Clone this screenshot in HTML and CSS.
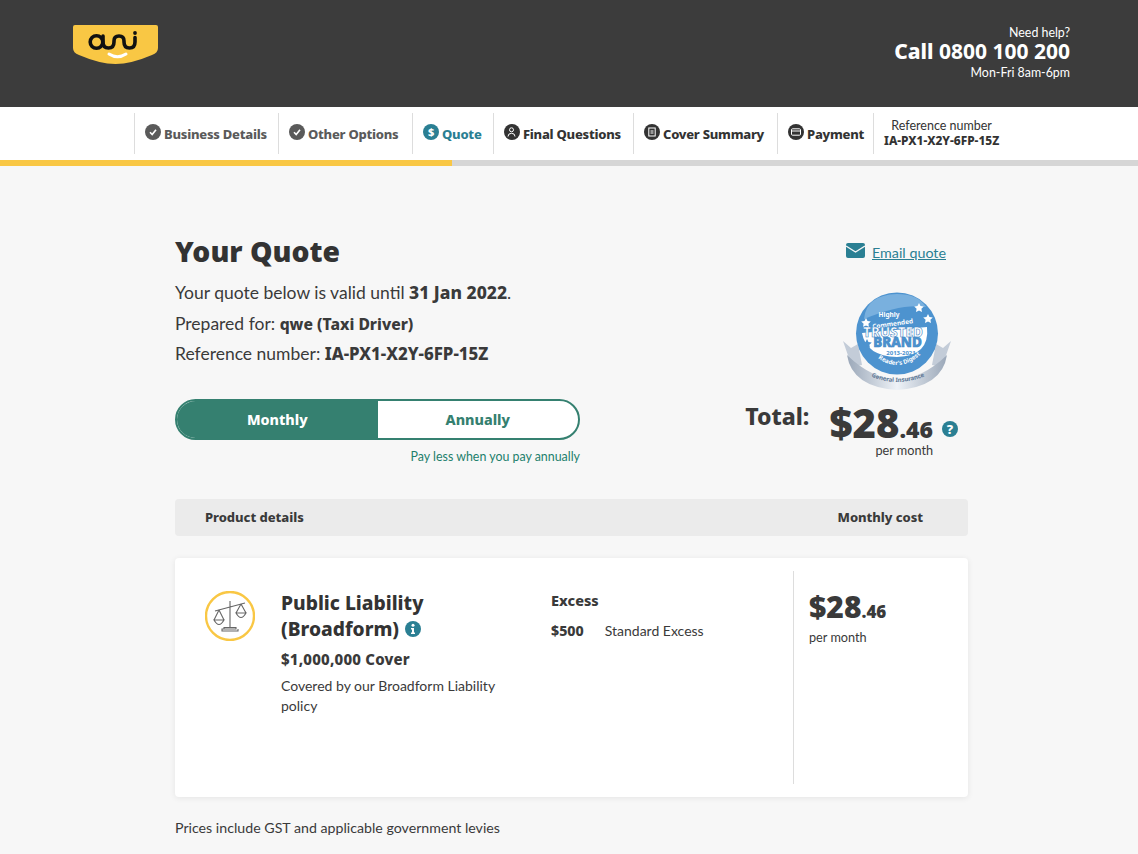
FILE: index.html
```html
<!DOCTYPE html>
<html lang="en">
<head>
<meta charset="utf-8">
<title>Your Quote</title>
<link rel="stylesheet" href="styles.css">
</head>
<body>
<header class="site-header">
  <svg class="logo" viewBox="0 0 85 40" width="85" height="40" aria-label="AMI">
    <path d="M2 0H83Q85 0 85 2V23Q85 28 79 30Q58 39 42.500 39Q27 39 6 30Q0 28 0 23V2Q0 0 2 0Z" fill="#f9c744"/>
    <g fill="none" stroke="#111" stroke-width="3.600" stroke-linecap="round">
      <circle cx="23.500" cy="17" r="6.300"/>
      <path d="M30 11V17Q30 23 35.500 23T41 17V16Q41 11 46 11T51 16V17Q51 23 56.500 23T62 17V12.500"/>
    </g>
    <circle cx="62" cy="8" r="1.900" fill="#111"/>
    <path d="M36 29Q44.500 34.500 53 29" fill="none" stroke="#fff" stroke-width="3" stroke-linecap="round"/>
  </svg>
  <div class="help">
    <div>Need help?</div>
    <div class="help-phone"><strong>Call</strong> 0800 100 200</div>
    <div>Mon-Fri 8am-6pm</div>
  </div>
</header>

<nav class="steps">
  <div class="step done s1">
    <svg class="step-icon" viewBox="0 0 16 16"><circle cx="8" cy="8" r="8"/><path d="M5 8.300l2.200 2.300L11 5.800" fill="none" stroke="#fff" stroke-width="1.600"/></svg>
    Business Details
  </div>
  <div class="step done s2">
    <svg class="step-icon" viewBox="0 0 16 16"><circle cx="8" cy="8" r="8"/><path d="M5 8.300l2.200 2.300L11 5.800" fill="none" stroke="#fff" stroke-width="1.600"/></svg>
    Other Options
  </div>
  <div class="step current s3">
    <svg class="step-icon" viewBox="0 0 16 16"><circle cx="8" cy="8" r="8"/><text x="8" y="12" text-anchor="middle" class="dollar">$</text></svg>
    Quote
  </div>
  <div class="step s4">
    <svg class="step-icon" viewBox="0 0 16 16"><circle cx="8" cy="8" r="8"/><circle cx="7.500" cy="5.800" r="2" fill="none" stroke="#fff"/><path d="M4 12.500Q4 9.300 7.500 9.300T11 12.500" fill="none" stroke="#fff"/></svg>
    Final Questions
  </div>
  <div class="step s5">
    <svg class="step-icon" viewBox="0 0 16 16"><circle cx="8" cy="8" r="8"/><rect x="4.800" y="4" width="6.400" height="8" fill="none" stroke="#fff"/><path d="M6.500 7h3M6.500 9h3" stroke="#fff"/></svg>
    Cover Summary
  </div>
  <div class="step s6">
    <svg class="step-icon" viewBox="0 0 16 16"><circle cx="8" cy="8" r="8"/><rect x="3.500" y="4.800" width="9" height="6.400" rx="1" fill="none" stroke="#fff"/><path d="M3.500 7h9" stroke="#fff"/></svg>
    Payment
  </div>
  <div class="step step-ref">
    <span>Reference number</span>
    <strong>IA-PX1-X2Y-6FP-15Z</strong>
  </div>
</nav>
<div class="progress"><div class="progress-fill"></div></div>

<main class="content">
  <section class="summary">
    <div class="summary-left">
      <h1>Your Quote</h1>
      <p>Your quote below is valid until <b class="b-date">31 Jan 2022</b>.</p>
      <p>Prepared for: <b class="b-name">qwe (Taxi Driver)</b></p>
      <p>Reference number: <b class="b-ref">IA-PX1-X2Y-6FP-15Z</b></p>
      <div class="toggle">
        <div class="toggle-opt active">Monthly</div>
        <div class="toggle-opt">Annually</div>
      </div>
      <div class="toggle-note">Pay less when you pay annually</div>
    </div>
    <div class="summary-right">
      <a class="email" href="#">
        <svg viewBox="0 0 19 15" width="19" height="15"><rect width="19" height="15" rx="2" fill="#2a7f93"/><path d="M0 3l9.500 6L19 3" fill="none" stroke="#f7f7f7" stroke-width="1.400"/></svg>
        <span>Email quote</span>
      </a>
      <svg class="badge" viewBox="0 0 110 100" width="110" height="100">
        <defs>
          <linearGradient id="rib" x1="0" x2="1" y1="0" y2="0"><stop offset="0" stop-color="#9aa7b8"/><stop offset=".5" stop-color="#eef2f7"/><stop offset="1" stop-color="#9aa7b8"/></linearGradient>
          <path id="arc-digest" d="M24 56Q55 92 86 56"/>
          <path id="arc-general" d="M20 81Q55 101 92 81"/>
        </defs>
        <path d="M1 50L9 57L16 53L20 74L10 76Z M109 50L101 57L94 53L90 74L100 76Z" fill="#c3ccd8"/>
        <path d="M5 64Q55 112 105 64Q100 96 55 99Q10 96 5 64Z" fill="url(#rib)"/>
        <circle cx="55" cy="42.500" r="41" fill="#4d93cf"/>
        <path d="M22 28Q24 4 55 3Q76 3 84 16Q60 12 22 28Z" fill="#79b0de"/>
        <path d="M20 42L85 36Q88 65 55 66Q24 65 20 42Z" fill="#fff"/>
        <g class="stars">
          <path d="M77 12l1.500 3 3.300.4-2.400 2.300.6 3.300-3-1.600-3 1.600.6-3.300-2.400-2.300 3.300-.4Z"/>
          <path d="M86 23l1.500 3 3.300.4-2.400 2.300.6 3.300-3-1.600-3 1.600.6-3.300-2.400-2.300 3.300-.4Z"/>
          <path d="M24 27l1.500 3 3.300.4-2.400 2.300.6 3.300-3-1.600-3 1.600.6-3.300-2.400-2.300 3.300-.4Z"/>
          <path d="M25 48l1.500 3 3.300.4-2.400 2.300.6 3.300-3-1.600-3 1.600.6-3.300-2.400-2.300 3.300-.4Z" class="star-blue"/>
        </g>
        <text x="47" y="26" class="b-small">Highly</text>
        <text x="51" y="35" class="b-small" transform="rotate(-8 51 35)">Commended</text>
        <text x="51" y="46" class="b-big">TRUSTED</text>
        <text x="55.500" y="56" class="b-big blue">BRAND</text>
        <text x="59" y="64" class="b-tiny blue">2013-2021</text>
        <text class="b-tiny"><textPath href="#arc-digest" startOffset="54%">Reader's Digest</textPath></text>
        <text class="b-tiny grey"><textPath href="#arc-general" startOffset="50%">General Insurance</textPath></text>
      </svg>
      <div class="total">
        <div class="total-label">Total:</div>
        <div class="total-price">
          <div class="total-amount">$28<small>.46</small><svg class="q" viewBox="0 0 16 16" width="16" height="16"><circle cx="8" cy="8" r="8" fill="#2a7f93"/><text x="8" y="12.500" text-anchor="middle" class="qm">?</text></svg></div>
          <div class="per">per month</div>
        </div>
      </div>
    </div>
  </section>

  <div class="table-head">
    <span>Product details</span>
    <span>Monthly cost</span>
  </div>

  <article class="card">
    <svg class="scale" viewBox="0 0 50 50" width="50" height="50">
      <circle cx="25" cy="25" r="24" fill="#fff" stroke="#f9c744" stroke-width="2.400"/>
      <g fill="none" stroke="#666" stroke-width="1.100">
        <path d="M25 10V37M10 20L40 12M19 38V36.500H31V38H17V40H33V38"/>
        <path d="M14 19L9 29M14 19L19 29M9 29Q14 38 19 29Z"/>
        <path d="M36 13L31 22M36 13L41 22M31 22Q36 31 41 22Z"/>
      </g>
    </svg>
    <div class="product">
      <h2>Public Liability (Broadform)<svg class="info" viewBox="0 0 16 16" width="16" height="16"><circle cx="8" cy="8" r="8" fill="#2a7f93"/><circle cx="8" cy="4.200" r="1.500" fill="#fff"/><path d="M6 7H9V11.500H10V13H6V11.500H7V8.500H6Z" fill="#fff"/></svg></h2>
      <div class="cover">$1,000,000 Cover</div>
      <p>Covered by our Broadform Liability policy</p>
    </div>
    <div class="excess">
      <h3>Excess</h3>
      <div class="excess-row"><b>$500</b><span>Standard Excess</span></div>
    </div>
    <div class="price">
      <div class="price-amount">$28<small>.46</small></div>
      <div class="price-per">per month</div>
    </div>
  </article>

  <p class="foot">Prices include GST and applicable government levies</p>
</main>
</body>
</html>
```
FILE: styles.css
```css
* { box-sizing: border-box; }
html, body { margin: 0; height: 100%; }
body {
  background: #f7f7f7;
  color: #3a3a3a;
  font-family: "Lato", "Noto Sans", sans-serif;
  font-size: 16px;
  overflow: hidden;
}
h1, h2, h3, b, strong, small, .step, .toggle-opt, .total-label, .total-amount, .table-head, .cover, .price-amount, .dollar, .qm {
  font-family: "Noto Sans", "Lato", sans-serif;
  font-weight: 800;
}
h1, .total-amount, .total-amount small, .price-amount, .price-amount small { font-weight: 900; }
.site-header {
  height: 107px;
  background: #3c3c3c;
  color: #fff;
  display: flex;
  justify-content: space-between;
  padding: 25px 68px 0 73px;
}
.help { text-align: right; font-size: 12.400px; line-height: 16px; }
.help-phone { margin: -1px 0 3px; font-family: "Noto Sans", sans-serif; font-size: 21px; line-height: 22px; font-weight: 700; }
.steps {
  height: 53px;
  background: #fff;
  display: flex;
  padding-left: 134px;
  padding-top: 6px;
}
.step {
  height: 41px;
  border-left: 1px solid #ddd;
  padding: 0 0 0 10px;
  display: flex;
  align-items: center;
  gap: 3px;
  font-size: 13px;
  letter-spacing: -.25px;
  color: #333;
  white-space: nowrap;
}
.s1 { width: 144px; }
.s2 { width: 134px; }
.s3 { width: 81px; }
.s4 { width: 140px; }
.s5 { width: 144px; }
.s6 { width: 96px; }
.step-icon { width: 16px; height: 16px; fill: #333; margin-top: -3px; flex: none; }
.step.done { color: #5a5a5a; }
.step.done .step-icon { fill: #5a5a5a; }
.step.current { color: #2a7f93; }
.step.current .step-icon { fill: #2a7f93; }
.dollar { fill: #fff; font-size: 11px; }
.step-ref {
  flex-direction: column;
  gap: 0;
  font-family: "Lato", sans-serif;
  font-size: 12.500px;
  font-weight: 400;
  letter-spacing: 0;
  line-height: 15px;
  justify-content: center;
  padding-bottom: 2px;
}
.step-ref strong { font-size: 11.900px; }
.progress { height: 6px; background: #d6d6d6; }
.progress-fill { width: 452px; height: 100%; background: #f9c744; }
.content { width: 793px; margin-left: 175px; }
.summary { display: flex; justify-content: space-between; height: 333px; }
.summary-left { width: 405px; padding-top: 66px; }
h1 { margin: 0 0 12px; font-size: 28.300px; line-height: 38px; color: #333; }
.summary-left p { margin: 0 0 8.500px; font-size: 17.500px; line-height: 22px; }
.summary-left b { line-height: 1; }
.b-date { font-size: 17.500px; }
.b-name { font-size: 15.700px; }
.b-ref { font-size: 16.900px; }
.toggle {
  margin-top: 33.500px;
  height: 41px;
  display: flex;
  border: 2px solid #358070;
  border-radius: 21px;
  overflow: hidden;
  background: #fff;
}
.toggle-opt {
  flex: 1;
  display: flex;
  align-items: center;
  justify-content: center;
  font-size: 14.300px;
  color: #358070;
}
.toggle-opt.active { background: #358070; color: #fff; }
.toggle-note { margin-top: 9px; text-align: right; font-size: 12.400px; line-height: 16px; color: #1d7f6c; }
.summary-right {
  width: 232px;
  margin-right: -9px;
  padding-top: 78px;
  display: flex;
  flex-direction: column;
  align-items: flex-end;
}
.email {
  display: flex;
  align-items: flex-start;
  gap: 7px;
  margin-right: 31px;
  font-size: 14.300px;
  color: #2a7f93;
  text-decoration: underline;
}
.email svg { margin-top: -1px; }
.badge { margin: 30px 25px 0 0; flex: none; }
.total { margin-top: 7px; display: flex; align-items: flex-start; width: 232px; gap: 20px; justify-content: flex-end; margin-right: 19px; }
.total-label { font-size: 23px; line-height: 30px; margin-top: 3px; }
.total-amount { margin-top: 11px; font-size: 40px; line-height: 28px; display: flex; align-items: baseline; white-space: nowrap; }
.total-amount small { font-size: 23px; }
.q { margin-left: 9px; align-self: center; margin-top: 6px; }
.qm { fill: #fff; font-size: 13px; }
.per { text-align: left; margin-left: 46px; font-size: 12.700px; line-height: 14px; }
.b-small { fill: #fff; font-size: 6.500px; font-weight: 700; text-anchor: middle; font-family: "Noto Sans", sans-serif; }
.b-tiny { fill: #fff; font-size: 6px; font-weight: 700; text-anchor: middle; font-family: "Noto Sans", sans-serif; }
.b-big { fill: #fff; stroke: #3f86c4; stroke-width: .6; font-size: 13.500px; font-weight: 800; text-anchor: middle; font-family: "Noto Sans", sans-serif; }
.blue { fill: #4d93cf; }
.grey { fill: #5d7795; }
.stars { fill: #fff; }
.star-blue { fill: #4d93cf; }
.table-head {
  height: 37px;
  background: #ebebeb;
  border-radius: 4px;
  display: flex;
  justify-content: space-between;
  align-items: center;
  padding: 0 45px 1px 30px;
  font-size: 13px;
  letter-spacing: -.05px;
}
.card {
  margin-top: 22px;
  height: 239px;
  background: #fff;
  border-radius: 4px;
  box-shadow: 0 1px 6px rgba(0,0,0,.08);
  display: flex;
  padding: 13px 0 13px 30px;
}
.scale { flex: none; margin-top: 20px; }
.product { width: 245px; margin-left: 26px; padding-top: 19px; }
h2 { margin: 0; font-size: 19.200px; line-height: 26px; color: #333; }
.info { margin-left: 6px; vertical-align: -1px; }
.cover { margin-top: 7px; font-size: 15px; letter-spacing: .2px; line-height: 20px; }
.product p { margin: 7px 0 0; font-size: 14px; line-height: 20px; }
.excess { width: 242px; margin-left: 25px; padding-top: 19px; }
h3 { margin: 0; font-size: 14.500px; line-height: 20px; }
.excess-row { margin-top: 11px; display: flex; gap: 21px; font-size: 14px; line-height: 20px; }
.excess-row b { font-size: 14.200px; }
.price { flex: 1; border-left: 1px solid #ddd; padding: 16px 0 0 15px; }
.price-amount { font-size: 30px; line-height: 40px; white-space: nowrap; }
.price-amount small { font-size: 17px; }
.price-per { font-size: 12.700px; line-height: 18px; margin-top: -4px; }
.foot { margin: 22px 0 0; font-size: 14.200px; line-height: 18px; }
```
